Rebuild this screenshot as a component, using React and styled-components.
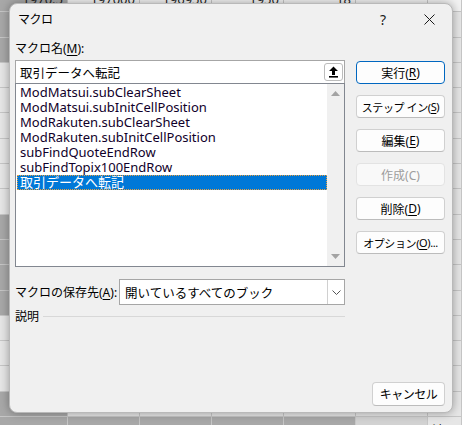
import React from "react";
import styled, { createGlobalStyle } from "styled-components";

const GlobalStyle = createGlobalStyle`
  html, body {
    margin: 0;
    padding: 0;
    width: 462px;
    height: 425px;
    overflow: hidden;
    background: #e6e6e6;
  }
  * {
    box-sizing: border-box;
  }
`;

const UI_FONT = `"Noto Sans", "Noto Sans CJK JP", sans-serif`;

const Page = styled.div`
  position: relative;
  width: 462px;
  height: 425px;
  overflow: hidden;
  font-family: ${UI_FONT};
`;

/* background worksheet */
const Sheet = styled.div`
  display: flex;
  flex-direction: column;
  margin: -13px 0 0 -4px;
`;

const SheetRow = styled.div`
  display: grid;
  grid-template-columns: repeat(6, 72px) 1fr;
  height: 25.3px;
`;

const SheetCell = styled.div`
  background: ${(p) => p.$bg};
  border-right: 1px solid #c6c6c6;
  border-bottom: 1px solid #c6c6c6;
  font-size: 13px;
  color: #222;
  display: flex;
  align-items: center;
  justify-content: ${(p) => (p.$left ? "flex-start" : "flex-end")};
  padding: 0 4px;
  white-space: nowrap;
  overflow: hidden;
`;

/* dialog */
const Dialog = styled.div`
  position: absolute;
  left: 9px;
  top: 3px;
  width: 444px;
  height: 410px;
  background: #f0f0f0;
  border: 1px solid #b9b9b9;
  border-radius: 8px;
  box-shadow: 0 0 10px rgba(0, 0, 0, 0.35);
  display: flex;
  flex-direction: column;
  color: #000;
  font-size: 12px;
`;

const TitleBar = styled.div`
  height: 30px;
  display: flex;
  align-items: center;
  padding: 0 0 0 8px;
`;

const Title = styled.span`
  flex: 1;
  font-size: 12px;
  letter-spacing: -0.5px;
`;

const TitleButton = styled.span`
  width: 46px;
  height: 30px;
  display: flex;
  align-items: center;
  justify-content: center;
  font-size: 14px;
  color: #1a1a1a;
`;

const Body = styled.div`
  flex: 1;
  display: grid;
  grid-template-columns: 330px 89px;
  column-gap: 11px;
  padding: 6px 8px 6px 5px;
`;

const LeftPane = styled.div`
  display: flex;
  flex-direction: column;
`;

const Label = styled.div`
  height: 17px;
  line-height: 17px;
  white-space: nowrap;
`;

const Key = styled.u`
  text-underline-offset: 2px;
`;

const NameInput = styled.div`
  margin-top: 3px;
  height: 23px;
  background: #fff;
  border: 1px solid #a6a6a6;
  border-bottom: none;
  display: flex;
  align-items: center;
  padding: 0 1px 0 4px;
`;

const InputText = styled.span`
  flex: 1;
  font-size: 12.5px;
`;

const UpButton = styled.span`
  width: 19px;
  height: 18px;
  border: 1px solid #bcbcbc;
  border-radius: 3px;
  background: #fff;
  display: flex;
  align-items: center;
  justify-content: center;
`;

const ListBox = styled.div`
  height: 184px;
  background: #fff;
  border: 1px solid #828790;
  display: flex;
`;

const Items = styled.div`
  flex: 1;
  padding: 1px 0 0 1px;
  display: flex;
  flex-direction: column;
`;

const Item = styled.div`
  height: 15px;
  line-height: 15px;
  padding-left: 3px;
  font-size: 13px;
  white-space: nowrap;
  color: ${(p) => (p.$selected ? "#fff" : "#10002a")};
  background: ${(p) => (p.$selected ? "#0078d7" : "transparent")};
  outline: ${(p) => (p.$selected ? "1px dotted #e8a040" : "none")};
  outline-offset: -1px;
`;

const ScrollBar = styled.div`
  width: 17px;
  background: #f0f0f0;
  display: flex;
  flex-direction: column;
  justify-content: space-between;
  align-items: center;
  padding: 7px 0 7px;
`;

const StoreRow = styled.div`
  margin-top: 12px;
  display: flex;
  align-items: center;
`;

const StoreLabel = styled(Label)`
  width: 104px;
`;

const Combo = styled.div`
  flex: 1;
  height: 26px;
  background: #fff;
  border: 1px solid #a6a6a6;
  display: flex;
  align-items: center;
`;

const ComboText = styled.span`
  flex: 1;
  padding-left: 5px;
  font-size: 12.5px;
`;

const ComboArrow = styled.span`
  width: 17px;
  height: 100%;
  border-left: 1px solid #d0d0d0;
  display: flex;
  align-items: center;
  justify-content: center;
`;

const GroupHeader = styled.div`
  margin-top: 3px;
  display: flex;
  align-items: center;
  gap: 4px;
`;

const GroupLine = styled.div`
  flex: 1;
  height: 1px;
  background: #d8d8d8;
`;

const RightPane = styled.div`
  display: flex;
  flex-direction: column;
  gap: 11px;
  padding-top: 21px;
`;

const Button = styled.div`
  height: 23px;
  border-radius: 4px;
  background: ${(p) => (p.$disabled ? "#f9f9f9" : "#fdfdfd")};
  border: 1px solid ${(p) => (p.$default ? "#0067c0" : p.$disabled ? "#e3e3e3" : "#d0d0d0")};
  border-bottom-color: ${(p) => (p.$default ? "#0067c0" : p.$disabled ? "#e3e3e3" : "#bcbcbc")};
  color: ${(p) => (p.$disabled ? "#9d9d9d" : "#000")};
  display: flex;
  align-items: center;
  justify-content: center;
  font-size: ${(p) => (p.$tight ? "11px" : "12px")};
  white-space: pre;
  letter-spacing: ${(p) => (p.$tight ? "-0.4px" : "0")};
`;

const CancelButton = styled(Button)`
  margin-top: auto;
  width: 73px;
  height: 24px;
  align-self: flex-end;
  letter-spacing: -0.5px;
`;

const UpIcon = () => (
  <svg width="11" height="12" viewBox="0 0 11 12">
    <path d="M5.5 0.5 L1 5 H4 V9 H7 V5 H10 Z" fill="#000" />
    <rect x="1" y="10" width="9" height="1.6" fill="#000" />
  </svg>
);

const Tri = ({ down }) => (
  <svg width="9" height="5" viewBox="0 0 9 5">
    <path d={down ? "M0 0 H9 L4.5 5 Z" : "M0 5 H9 L4.5 0 Z"} fill="#a3a3a3" />
  </svg>
);

const Chevron = () => (
  <svg width="9" height="5" viewBox="0 0 9 5">
    <path d="M0.5 0.5 L4.5 4.5 L8.5 0.5" fill="none" stroke="#555" strokeWidth="1" />
  </svg>
);

const CloseIcon = () => (
  <svg width="11" height="11" viewBox="0 0 11 11">
    <path d="M0.5 0.5 L10.5 10.5 M10.5 0.5 L0.5 10.5" stroke="#1a1a1a" strokeWidth="1" />
  </svg>
);

const DARK = "#a8a8a8";
const LIGHT = "#e6e6e6";
const MID = "#d2d2d2";

const darkRows = [0, 1, 2, 9, 10, 11, 12, 16, 17];
const topNumbers = ["1970.5", "197000", "196950", "1950", "18", "", ""];
const bottomNumbers = ["2805.5", "287000", "280550", "2550", "26", "", "済"];

const macros = [
  "ModMatsui.subClearSheet",
  "ModMatsui.subInitCellPosition",
  "ModRakuten.subClearSheet",
  "ModRakuten.subInitCellPosition",
  "subFindQuoteEndRow",
  "subFindTopix100EndRow",
  "取引データへ転記",
];

const buttons = [
  { label: "実行", key: "R", def: true },
  { label: "ステップ イン", key: "S", tight: true },
  { label: "編集", key: "E" },
  { label: "作成", key: "C", disabled: true },
  { label: "削除", key: "D" },
  { label: "オプション", key: "O", suffix: "...", tight: true },
];

const App = () => {
  const rows = Array.from({ length: 18 }, (_, i) => i);

  return (
    <>
      <GlobalStyle />
      <Page>
        <Sheet>
          {rows.map((r) => (
            <SheetRow key={r}>
              {Array.from({ length: 7 }, (_, c) => {
                let bg = LIGHT;
                if (c === 0 && darkRows.includes(r)) bg = DARK;
                if (r === 17 && c < 5) bg = DARK;
                if (r === 17 && c === 5) bg = MID;
                if (r === 0 && c > 0) bg = "#f2f2f2";
                let text = "";
                if (r === 0) text = topNumbers[c];
                if (r === 17) text = bottomNumbers[c];
                return (
                  <SheetCell key={c} $bg={bg} $left={c === 6}>
                    {text}
                  </SheetCell>
                );
              })}
            </SheetRow>
          ))}
        </Sheet>

        <Dialog>
          <TitleBar>
            <Title>マクロ</Title>
            <TitleButton>?</TitleButton>
            <TitleButton>
              <CloseIcon />
            </TitleButton>
          </TitleBar>

          <Body>
            <LeftPane>
              <Label>
                マクロ名(<Key>M</Key>):
              </Label>
              <NameInput>
                <InputText>取引データへ転記</InputText>
                <UpButton>
                  <UpIcon />
                </UpButton>
              </NameInput>
              <ListBox>
                <Items>
                  {macros.map((m, i) => (
                    <Item key={m} $selected={i === macros.length - 1}>
                      {m}
                    </Item>
                  ))}
                </Items>
                <ScrollBar>
                  <Tri />
                  <Tri down />
                </ScrollBar>
              </ListBox>
              <StoreRow>
                <StoreLabel>
                  マクロの保存先(<Key>A</Key>):
                </StoreLabel>
                <Combo>
                  <ComboText>開いているすべてのブック</ComboText>
                  <ComboArrow>
                    <Chevron />
                  </ComboArrow>
                </Combo>
              </StoreRow>
              <GroupHeader>
                <Label>説明</Label>
                <GroupLine />
              </GroupHeader>
            </LeftPane>

            <RightPane>
              {buttons.map((b) => (
                <Button
                  key={b.key}
                  $default={b.def}
                  $disabled={b.disabled}
                  $tight={b.tight}
                >
                  {b.label}(
                  {b.disabled ? b.key : <Key>{b.key}</Key>}){b.suffix}
                </Button>
              ))}
              <CancelButton>キャンセル</CancelButton>
            </RightPane>
          </Body>
        </Dialog>
      </Page>
    </>
  );
};

export default App;
